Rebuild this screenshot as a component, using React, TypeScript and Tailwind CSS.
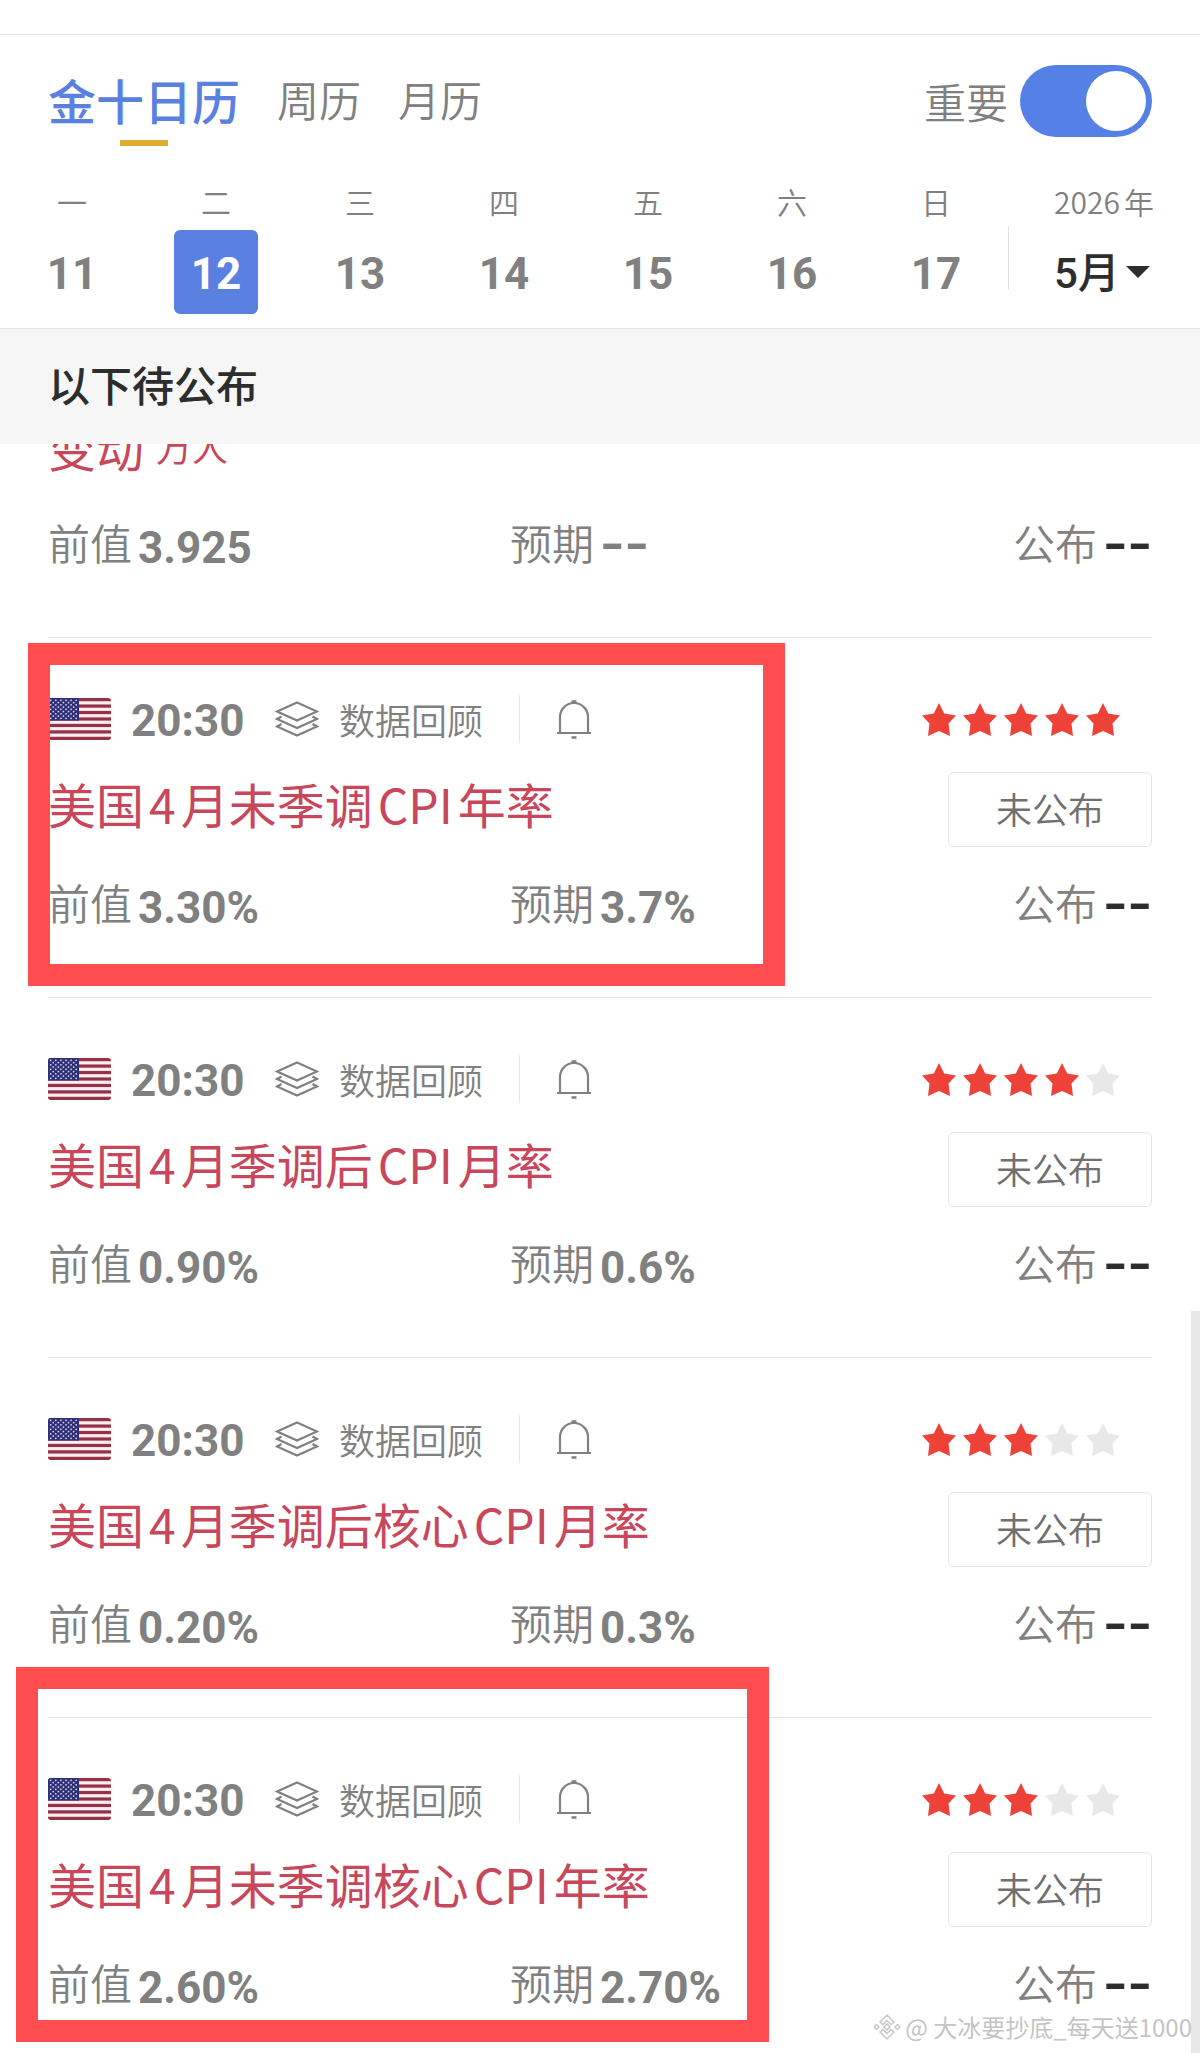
import { useState } from "react";
import type { ReactNode } from "react";
import clsx from "clsx";

const CJK = "font-['Noto_Sans_CJK_SC',sans-serif]";
const NUM = "font-['Roboto','Noto_Sans_CJK_SC',sans-serif]";

type Item = {
  title: ReactNode;
  prev: string;
  forecast: string;
  stars: number;
  mark?: string;
};

const DAYS = [
  { week: "一", date: 11 },
  { week: "二", date: 12 },
  { week: "三", date: 13 },
  { week: "四", date: 14 },
  { week: "五", date: 15 },
  { week: "六", date: 16 },
  { week: "日", date: 17 },
];

const ITEMS: Item[] = [
  {
    title: <>美国<Latin>4</Latin>月未季调<Latin>CPI</Latin>年率</>,
    prev: "3.30%",
    forecast: "3.7%",
    stars: 5,
    mark: "-left-5 top-[5px] h-[343px] w-[757px]",
  },
  {
    title: <>美国<Latin>4</Latin>月季调后<Latin>CPI</Latin>月率</>,
    prev: "0.90%",
    forecast: "0.6%",
    stars: 4,
  },
  {
    title: <>美国<Latin>4</Latin>月季调后核心<Latin>CPI</Latin>月率</>,
    prev: "0.20%",
    forecast: "0.3%",
    stars: 3,
  },
  {
    title: <>美国<Latin>4</Latin>月未季调核心<Latin>CPI</Latin>年率</>,
    prev: "2.60%",
    forecast: "2.70%",
    stars: 3,
    mark: "-left-8 top-[-51px] h-[375px] w-[753px]",
  },
];

// Latin runs inside a Chinese title get a little air on both sides
function Latin({ children }: { children: ReactNode }) {
  return <span className="mx-[5px]">{children}</span>;
}

function Flag() {
  return (
    <svg viewBox="0 0 63 42" className="h-[42px] w-[63px] shrink-0 rounded-[3px]" role="img" aria-label="美国">
      <rect width="63" height="42" fill="#fbeef0" />
      {[0, 1, 2, 3, 4, 5, 6].map((i) => (
        <rect key={i} y={(i * 84) / 13} width="63" height={42 / 13} fill="#963247" />
      ))}
      <rect width="31" height="22.6" fill="#30307a" />
      {[0, 1, 2, 3, 4, 5, 6, 7, 8].map((r) =>
        Array.from({ length: r % 2 ? 5 : 6 }, (_, c) => (
          <circle
            key={`${r}-${c}`}
            cx={2.7 + c * 5.1 + (r % 2 ? 2.55 : 0)}
            cy={2.3 + r * 2.25}
            r="0.85"
            fill="#dcdcf0"
          />
        )),
      )}
    </svg>
  );
}

function LayersIcon() {
  return (
    <svg viewBox="0 0 44 36" className="h-9 w-11 shrink-0" fill="none" stroke="#808080" strokeWidth="2.200" aria-hidden="true">
      <path d="M22 1.500 42 10.500 22 19.500 2 10.500Z" />
      <path d="M6.500 15.500 2 18 22 27 42 18 37.500 15.500" />
      <path d="M6.500 23 2 25.500 22 34.500 42 25.500 37.500 23" />
    </svg>
  );
}

function BellIcon() {
  return (
    <svg viewBox="0 0 36 40" className="h-10 w-9" fill="none" stroke="#808080" strokeWidth="2.200" aria-hidden="true">
      <path d="M4 34V18a14 14 0 0 1 28 0v16" />
      <path d="M1 34h34" />
      <path d="M15.500 2.500h5M15.500 38.500h5" strokeWidth="2.500" />
    </svg>
  );
}

function Stars({ count }: { count: number }) {
  return (
    <div className="mr-8 flex gap-[7px]" role="img" aria-label={`重要性 ${count} 星`}>
      {[1, 2, 3, 4, 5].map((n) => (
        <svg key={n} viewBox="0 0 34 33" className="h-[33px] w-[34px]" fill={n <= count ? "#ee4238" : "#e8e8e8"}>
          <path d="M17 0 22.200 10.500 34 12.500 26.500 20.500 28 33 17 28 6 33 7.500 20.500 0 12.500 11.800 10.500Z" />
        </svg>
      ))}
    </div>
  );
}

function Value({ label, value, dark }: { label: string; value: string; dark?: boolean }) {
  return (
    <div className="flex h-12 items-center gap-[6px]">
      <dt className="text-[42px] leading-[48px] font-[350]">{label}</dt>
      <dd className={dark ? "text-[#2d2d2d]" : "text-[#808080]"}>
        {value === "--" ? (
          <span className="block font-['DejaVu_Sans',sans-serif] text-[68px] leading-[48px]">--</span>
        ) : (
          <span className={clsx(NUM, "block pt-3 text-[44px] leading-[48px] font-bold")}>{value}</span>
        )}
      </dd>
    </div>
  );
}

function Values({ prev, forecast }: { prev: string; forecast: string }) {
  return (
    <dl className="mt-[31px] grid grid-cols-[462fr_642fr] text-[#808080]">
      <Value label="前值" value={prev} />
      <div className="flex justify-between">
        <Value label="预期" value={forecast} />
        <Value label="公布" value="--" dark />
      </div>
    </dl>
  );
}

function EventItem({ item }: { item: Item }) {
  return (
    <li className="relative border-t border-[#e4e4e4] pt-[57px] pb-[71px]">
      <div className="flex h-12 items-center">
        <Flag />
        <time className={clsx(NUM, "ml-5 w-[108px] pt-1 text-[44px] leading-[48px] font-bold text-[#808080]")}>
          20:30
        </time>
        <a href="#review" className="ml-9 flex items-center gap-5 text-[36px] leading-[48px] font-[350] text-[#808080]">
          <LayersIcon />
          数据回顾
        </a>
        <span className="mx-9 h-12 w-px bg-[#e6e6e6]" />
        <button type="button" aria-label="提醒">
          <BellIcon />
        </button>
        <div className="ml-auto">
          <Stars count={item.stars} />
        </div>
      </div>
      <div className="mt-[29px] flex h-[75px] items-start justify-between">
        <h2 className="text-[48px] leading-[62px] text-[#c8475a]">{item.title}</h2>
        <button
          type="button"
          className="h-[75px] w-[204px] rounded-md border border-[#e4e4e4] pb-1 text-[36px] leading-[48px] font-[350] text-[#707070]"
        >
          未公布
        </button>
      </div>
      <Values prev={item.prev} forecast={item.forecast} />
      {item.mark && (
        <div className={clsx("pointer-events-none absolute z-10 border-[22px] border-[#ff4d50]", item.mark)} />
      )}
    </li>
  );
}

function Header() {
  const [selected, setSelected] = useState(12);

  return (
    <header className="mt-[34px] border-y border-[#e2e2e2]">
      <div className="flex items-center justify-between px-12 pt-7">
        <nav className="flex items-center gap-[37px] pb-1 text-[42px] leading-[72px] font-[350] text-[#808080]">
          <a href="#day" aria-current="page" className="text-[48px] leading-[72px] font-medium text-[#5a80e0]">
            金十日历
          </a>
          <a href="#week">周历</a>
          <a href="#month">月历</a>
        </nav>
        <label className="flex items-center gap-3 text-[42px] leading-[76px] font-[350] text-[#808080]">
          重要
          <input
            type="checkbox"
            role="switch"
            defaultChecked
            className="flex h-[72px] w-[132px] appearance-none items-center rounded-full bg-[#ccc] p-[6px] before:size-[60px] before:rounded-full before:bg-white checked:justify-end checked:bg-[#5580e6]"
          />
        </label>
      </div>
      <div className="mt-px ml-[120px] h-[6px] w-12 bg-[#e0ad33]" />
      <div className="mt-[35px] flex items-stretch pb-[14px]">
        <div className="grid flex-1 grid-cols-7">
          {DAYS.map((d) => (
            <button
              key={d.date}
              type="button"
              onClick={() => setSelected(d.date)}
              className="flex flex-col items-center gap-[9px] text-[#808080]"
            >
              <span className="text-[30px] leading-[40px] font-[350]">{d.week}</span>
              <span
                className={clsx(
                  NUM,
                  "flex size-[84px] items-center justify-center rounded-md pt-1 text-[44px] leading-[48px] font-bold",
                  selected === d.date && "bg-[#5a80e2] text-white",
                )}
              >
                {d.date}
              </span>
            </button>
          ))}
        </div>
        <div className="mt-[45px] h-16 w-px bg-[#e2e2e2]" />
        <div className="flex w-[191px] flex-col pl-[45px]">
          <span className="text-[30px] leading-[40px] font-[350] text-[#808080]">
            <span className="mr-1">2026</span>年
          </span>
          <div className="mt-[9px] flex h-[84px] items-center gap-2 text-[#2d2d2d]">
            <select
              aria-label="月份"
              defaultValue="5"
              className={clsx(NUM, "w-16 appearance-none pt-1 text-[42px] leading-[60px] font-medium")}
            >
              <option value="4">4月</option>
              <option value="5">5月</option>
              <option value="6">6月</option>
            </select>
            <svg viewBox="0 0 24 12" className="h-3 w-6" fill="#2d2d2d" aria-hidden="true">
              <path d="M0 0h24L12 12Z" />
            </svg>
          </div>
        </div>
      </div>
    </header>
  );
}

function Watermark() {
  return (
    <div className="absolute right-2 bottom-[10px] z-20 flex items-center gap-1 text-[24px] leading-[32px] text-[#c4c4c4]">
      <svg viewBox="0 0 28 28" className="size-7" fill="none" stroke="#c8c8c8" strokeWidth="1.500" aria-hidden="true">
        <path d="M7 9 14 2l7 7-3 2.500-4-4-4 4ZM7 19l7 7 7-7-3-2.500-4 4-4-4ZM14 11l3 3-3 3-3-3ZM3.500 11.500 6 14 3.500 16.500 1 14ZM24.500 11.500 27 14 24.500 16.500 22 14Z" />
      </svg>
      <span>@ 大冰要抄底_每天送1000</span>
    </div>
  );
}

export default function App() {
  return (
    <div className={clsx(CJK, "relative flex h-screen flex-col overflow-hidden bg-white")}>
      <Header />
      <h1 className="shrink-0 bg-[#f6f6f6] px-12 pt-[25px] pb-[30px] text-[42px] leading-[60px] font-medium text-[#2d2d2d]">
        以下待公布
      </h1>
      <main className="min-h-0 flex-1 overflow-hidden px-12">
        <div className="-mt-8 pb-[71px]">
          <p className="flex h-[75px] items-start gap-3 text-[48px] leading-[68px] text-[#c8475a]">
            变动 <span className="text-[36px]">万人</span>
          </p>
          <Values prev="3.925" forecast="--" />
        </div>
        <ul>
          {ITEMS.map((item, i) => (
            <EventItem key={i} item={item} />
          ))}
        </ul>
      </main>
      <div className="absolute top-[1311px] right-0 bottom-0 w-[9px] bg-[#e8e8e8]" />
      <Watermark />
    </div>
  );
}
